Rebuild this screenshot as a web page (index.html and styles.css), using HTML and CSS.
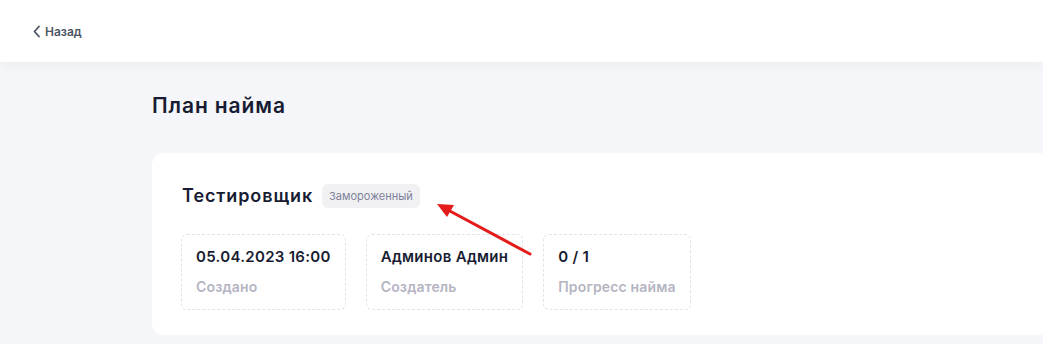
FILE: index.html
```html
<!DOCTYPE html>
<html lang="ru">
<head>
    <meta charset="UTF-8">
    <meta name="viewport" content="width=device-width, initial-scale=1.0">
    <title>План найма</title>
    <link rel="stylesheet" href="styles.css">
</head>
<body>
    <header class="topbar">
        <a class="back-link" href="#">
            <svg width="9" height="13" viewBox="0 0 9 13"><path d="M7 1.5L2.5 6.5L7 11.5" fill="none" stroke="#4b5563" stroke-width="1.8" stroke-linecap="round" stroke-linejoin="round"/></svg>
            Назад
        </a>
    </header>

    <main class="content">
        <h1 class="page-title">План найма</h1>

        <section class="plan-card">
            <div class="plan-head">
                <h2 class="plan-name">Тестировщик</h2>
                <span class="badge">Замороженный</span>
            </div>

            <div class="stats">
                <div class="stat">
                    <div class="stat-value">05.04.2023 16:00</div>
                    <div class="stat-label">Создано</div>
                </div>
                <div class="stat">
                    <div class="stat-value">Админов Админ</div>
                    <div class="stat-label">Создатель</div>
                </div>
                <div class="stat">
                    <div class="stat-value">0 / 1</div>
                    <div class="stat-label">Прогресс найма</div>
                </div>
            </div>
        </section>
    </main>

    <svg class="pointer" width="110" height="60" viewBox="0 0 110 60">
        <line x1="98" y1="54" x2="16" y2="10" stroke="#e31b1b" stroke-width="3" stroke-linecap="round"/>
        <polygon points="5,4 22,5 15,17" fill="#e31b1b"/>
    </svg>
</body>
</html>
```

FILE: styles.css
```css
body {
    margin: 0;
    font-family: Inter, "Open Sans", Arial, sans-serif;
    background-color: #f4f6f9;
    color: #181c32;
    overflow: hidden;
    position: relative;
}
.topbar {
    height: 62px;
    background-color: white;
    box-shadow: 0 4px 10px rgba(0,0,0,0.04);
    display: flex;
    align-items: center;
    padding-left: 32px;
}
.back-link {
    display: flex;
    align-items: center;
    gap: 4px;
    color: #4b5563;
    font-size: 12px;
    font-weight: 600;
    text-decoration: none;
}
.content {
    padding: 30px 0 0 152px;
}
.page-title {
    margin: 0;
    font-size: 21px;
    font-weight: 600;
    letter-spacing: 0.9px;
    line-height: 28px;
    color: #181c32;
}
.plan-card {
    margin-top: 33px;
    margin-right: -40px;
    background-color: white;
    border-radius: 12px;
    padding: 30px 30px 26px;
    height: 126px;
}
.plan-head {
    display: flex;
    align-items: center;
    gap: 9px;
}
.plan-name {
    margin: 0;
    font-size: 18px;
    font-weight: 600;
    letter-spacing: 0.9px;
    line-height: 26px;
}
.badge {
    background-color: #f1f1f4;
    color: #7e8299;
    font-size: 11px;
    padding: 5px 7px;
    border-radius: 6px;
    line-height: 14px;
}
.stats {
    display: flex;
    gap: 20px;
    margin-top: 25px;
    margin-left: -1px;
}
.stat {
    border: 1px dashed #e1e3ea;
    border-radius: 6px;
    padding: 11px 14px 12px;
}
.stat-value {
    font-size: 15px;
    font-weight: 600;
    letter-spacing: 0.3px;
    line-height: 22px;
    color: #181c32;
}
.stat-label {
    margin-top: 9px;
    font-size: 14px;
    font-weight: 600;
    letter-spacing: 0.15px;
    line-height: 20px;
    color: #b5b5c3;
}
.pointer {
    position: absolute;
    left: 432px;
    top: 200px;
}
```
